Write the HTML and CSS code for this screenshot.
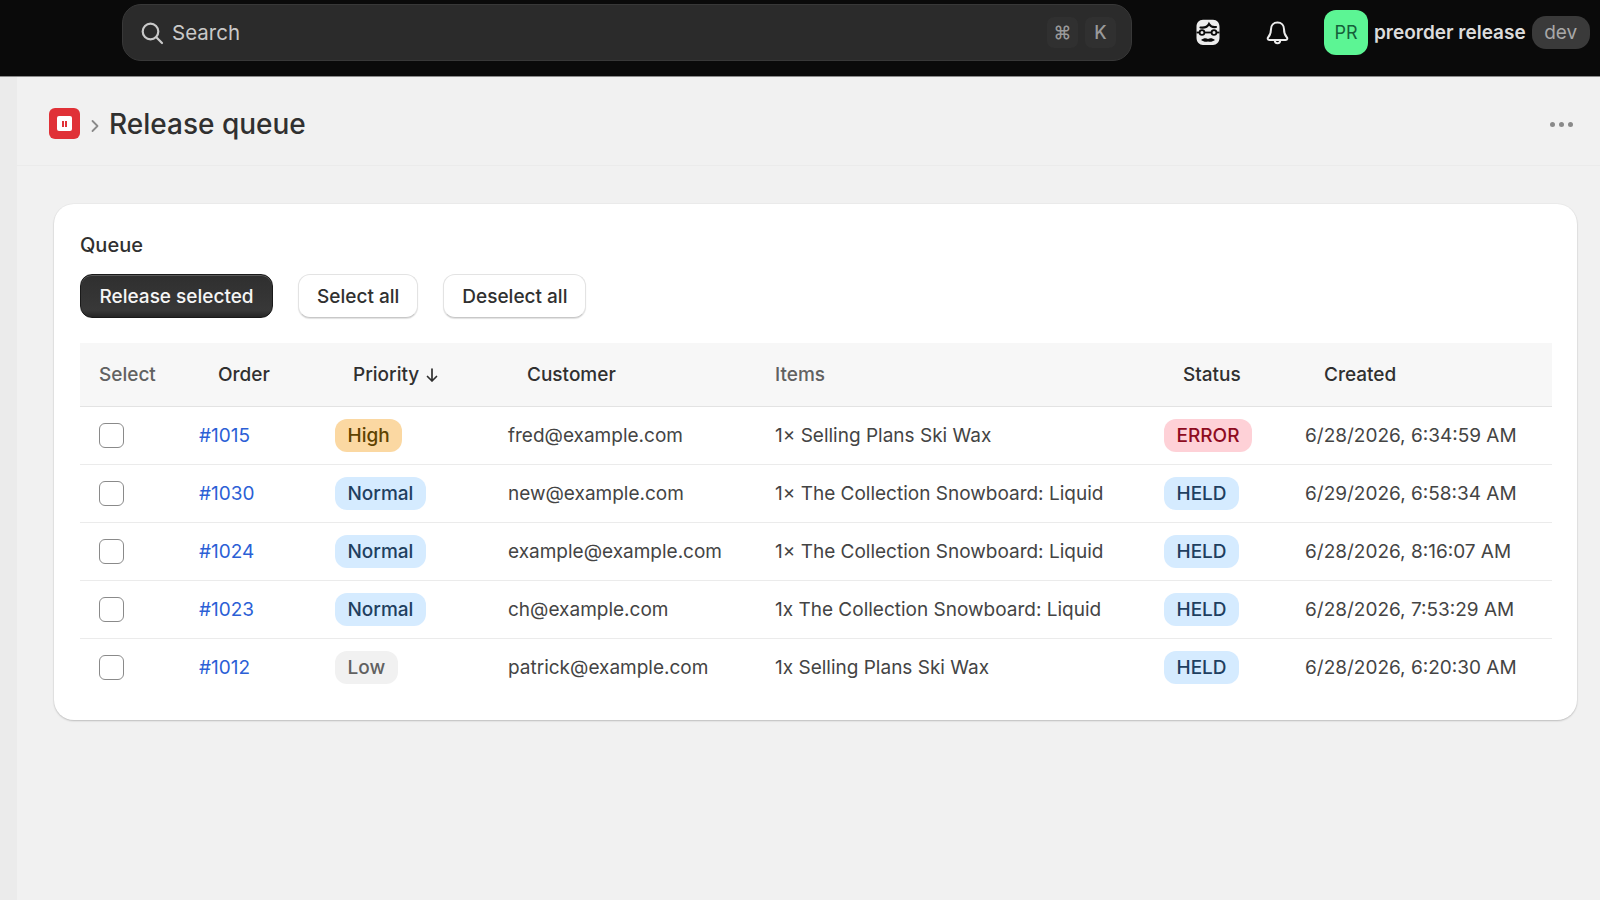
FILE: index.html
```html
<!DOCTYPE html>
<html lang="en">
<head>
  <meta charset="UTF-8" />
  <title>Release queue</title>
  <link rel="stylesheet" href="styles.css">
</head>
<body>
  <header class="topbar">
    <div class="search">
      <svg class="search-icon" width="24" height="24" viewBox="0 0 24 24" fill="none" stroke="currentColor" stroke-width="2.2" stroke-linecap="round">
        <circle cx="10.5" cy="10.5" r="7.8"/>
        <path d="M16.3 16.3l5.7 5.7"/>
      </svg>
      <span class="search-text">Search</span>
      <span class="kbd">⌘</span>
      <span class="kbd">K</span>
    </div>
    <svg class="face" width="24" height="27" viewBox="0 0 24 27">
      <path d="M7 .8h10c4 0 6.500 3 6.500 7v11c0 4.500-3 7.200-6.500 7.200H7c-3.500 0-6.500-2.700-6.500-7.200v-11c0-4 2.500-7 6.500-7z" fill="#ececec"/>
      <path d="M4.500 8.500c4 .5 7-.5 8.500-3.500 1.500 2.500 4 3.500 7 3" fill="none" stroke="#0a0a0a" stroke-width="2.200" stroke-linecap="round"/>
      <path d="M.5 13.500h23" stroke="#0a0a0a" stroke-width="1.800"/>
      <circle cx="6" cy="13.500" r="2.400" fill="#ececec" stroke="#0a0a0a" stroke-width="1.800"/>
      <circle cx="18" cy="13.500" r="2.400" fill="#ececec" stroke="#0a0a0a" stroke-width="1.800"/>
      <path d="M5 21c2.500-2 5-2.500 7-1 2-1.500 4.500-1 7 1-2.500 1.800-4.500 2-7 1.500-2.500.5-4.500.3-7-1.500z" fill="#0a0a0a"/>
    </svg>
    <svg class="bell" width="23" height="24" viewBox="0 0 23 24" fill="none" stroke="#ececec" stroke-width="2" stroke-linejoin="round">
      <path d="M11.500 1.500c-4 0-6.500 3-6.500 6.800 0 3.700-.8 5.700-2.600 7.700-1.200 1.300-.8 3 1 3h16.200c1.800 0 2.200-1.700 1-3-1.800-2-2.600-4-2.600-7.700 0-3.800-2.500-6.800-6.500-6.800z"/>
      <path d="M8.800 19.500c0 3.500 5.400 3.500 5.400 0"/>
    </svg>
    <div class="avatar">PR</div>
    <span class="shop-name">preorder release</span>
    <span class="dev-tag">dev</span>
  </header>

  <div class="layout">
    <div class="sidebar"></div>
    <main class="main">
      <div class="page-head">
        <div class="app-logo">
          <div class="app-logo-inner"><span></span><span></span></div>
        </div>
        <svg class="crumb" width="10" height="16" viewBox="0 0 10 16" fill="none" stroke="#8a8a8a" stroke-width="1.800" stroke-linecap="round" stroke-linejoin="round">
          <path d="M2.500 3l5 5-5 5"/>
        </svg>
        <h1>Release queue</h1>
        <div class="dots"><i></i><i></i><i></i></div>
      </div>

      <section class="card">
        <h2>Queue</h2>
        <div class="actions">
          <button class="btn btn-primary">Release selected</button>
          <button class="btn">Select all</button>
          <button class="btn">Deselect all</button>
        </div>

        <table class="queue">
          <colgroup>
            <col class="c-select"><col class="c-order"><col class="c-priority"><col class="c-customer"><col class="c-items"><col class="c-status"><col class="c-created">
          </colgroup>
          <thead>
            <tr>
              <th class="muted">Select</th>
              <th class="sortable">Order</th>
              <th class="sortable th-priority">Priority <svg class="arrow" width="14" height="16" viewBox="0 0 14 16" fill="none" stroke="currentColor" stroke-width="1.700" stroke-linecap="round" stroke-linejoin="round"><path d="M7 2v12M2.500 9.500L7 14l4.500-4.500"/></svg></th>
              <th class="sortable">Customer</th>
              <th class="muted flush">Items</th>
              <th class="sortable">Status</th>
              <th class="sortable">Created</th>
            </tr>
          </thead>
          <tbody>
            <tr>
              <td><span class="check"></span></td>
              <td><a href="#">#1015</a></td>
              <td><span class="pill pill-high">High</span></td>
              <td>fred@example.com</td>
              <td class="flush">1× Selling Plans Ski Wax</td>
              <td><span class="pill pill-error">ERROR</span></td>
              <td>6/28/2026, 6:34:59 AM</td>
            </tr>
            <tr>
              <td><span class="check"></span></td>
              <td><a href="#">#1030</a></td>
              <td><span class="pill pill-info">Normal</span></td>
              <td>new@example.com</td>
              <td class="flush">1× The Collection Snowboard: Liquid</td>
              <td><span class="pill pill-info">HELD</span></td>
              <td>6/29/2026, 6:58:34 AM</td>
            </tr>
            <tr>
              <td><span class="check"></span></td>
              <td><a href="#">#1024</a></td>
              <td><span class="pill pill-info">Normal</span></td>
              <td>example@example.com</td>
              <td class="flush">1× The Collection Snowboard: Liquid</td>
              <td><span class="pill pill-info">HELD</span></td>
              <td>6/28/2026, 8:16:07 AM</td>
            </tr>
            <tr>
              <td><span class="check"></span></td>
              <td><a href="#">#1023</a></td>
              <td><span class="pill pill-info">Normal</span></td>
              <td>ch@example.com</td>
              <td class="flush">1x The Collection Snowboard: Liquid</td>
              <td><span class="pill pill-info">HELD</span></td>
              <td>6/28/2026, 7:53:29 AM</td>
            </tr>
            <tr>
              <td><span class="check"></span></td>
              <td><a href="#">#1012</a></td>
              <td><span class="pill pill-low">Low</span></td>
              <td>patrick@example.com</td>
              <td class="flush">1x Selling Plans Ski Wax</td>
              <td><span class="pill pill-info">HELD</span></td>
              <td>6/28/2026, 6:20:30 AM</td>
            </tr>
          </tbody>
        </table>
      </section>
    </main>
  </div>
</body>
</html>
```

FILE: styles.css
```css
html, body {
  height: 100%;
}

body {
  margin: 0;
  height: 900px;
  overflow: hidden;
  font-family: 'Inter', sans-serif;
  font-size: 19px;
  color: #303030;
  background: #f1f1f1;
  display: flex;
  flex-direction: column;
}

/* top bar */
.topbar {
  height: 76px;
  box-sizing: content-box;
  flex: none;
  background: #0a0a0a;
  border-bottom: 1px solid #8a8a8a;
  display: flex;
  align-items: flex-start;
  padding-left: 122px;
}

.search {
  width: 1010px;
  height: 57px;
  margin-top: 4px;
  box-sizing: border-box;
  background: #2b2b2b;
  border: 1px solid #383838;
  border-radius: 19px;
  display: flex;
  align-items: center;
  padding: 0 15px 0 17px;
  color: #c9c9c9;
}

.search-icon {
  flex: none;
}

.search-text {
  margin-left: 8px;
  font-size: 20.500px;
  flex: 1;
}

.kbd {
  width: 31px;
  height: 31px;
  margin-left: 7px;
  border-radius: 7px;
  background: #303030;
  color: #9a9a9a;
  display: flex;
  align-items: center;
  justify-content: center;
  font-size: 18px;
  font-weight: 500;
}

.face {
  margin: 19px 0 0 64px;
  flex: none;
}

.bell {
  margin: 21px 0 0 46px;
  flex: none;
}

.avatar {
  margin: 10px 0 0 35px;
  width: 44px;
  height: 45px;
  border-radius: 12px;
  background: #5cf594;
  color: #15603a;
  display: flex;
  align-items: center;
  justify-content: center;
  font-size: 18px;
}

.shop-name {
  margin-left: 6px;
  line-height: 65px;
  color: #dcdcdc;
  font-size: 19px;
  font-weight: 600;
  white-space: nowrap;
}

.dev-tag {
  margin: 16px 0 0 6px;
  width: 58px;
  height: 33px;
  border-radius: 14px;
  background: #3a3a3a;
  color: #a8a8a8;
  display: flex;
  align-items: center;
  justify-content: center;
  font-size: 19px;
}

/* page */
.layout {
  flex: 1;
  display: flex;
}

.sidebar {
  width: 17px;
  flex: none;
  background: #ebebeb;
}

.main {
  flex: 1;
  min-width: 0;
}

.page-head {
  height: 89px;
  box-sizing: border-box;
  border-bottom: 1px solid #ebebeb;
  display: flex;
  align-items: center;
  padding: 5px 27px 0 32px;
}

.app-logo {
  width: 31px;
  height: 31px;
  border-radius: 6px;
  background: #e03137;
  display: flex;
  align-items: center;
  justify-content: center;
}

.app-logo-inner {
  width: 15px;
  height: 15px;
  border-radius: 2px;
  background: #fff;
  display: flex;
  align-items: center;
  justify-content: center;
  gap: 1.500px;
}

.app-logo-inner span {
  width: 2px;
  height: 6px;
  background: #e03137;
}

.crumb {
  margin: 4px 0 0 10px;
}

h1 {
  margin: 0 0 0 9px;
  font-size: 28px;
  font-weight: 500;
  color: #303030;
  flex: 1;
}

.dots {
  display: flex;
  gap: 4px;
  margin-top: 1px;
}

.dots i {
  width: 5px;
  height: 5px;
  border-radius: 50%;
  background: #8a8a8a;
}

.card {
  margin: 38px 23px 0 37px;
  height: 516px;
  box-sizing: border-box;
  padding: 29px 26px 0;
  background: #fff;
  border-radius: 20px;
  box-shadow: 0 1px 2px rgba(0, 0, 0, 0.2), 0 0 0 1px rgba(0, 0, 0, 0.02);
}

h2 {
  margin: 0;
  font-size: 20px;
  line-height: 25px;
  font-weight: 500;
}

.actions {
  display: flex;
  gap: 25px;
  margin-top: 16px;
}

.btn {
  height: 44px;
  padding: 0 18px;
  font-family: inherit;
  font-size: 19px;
  font-weight: 500;
  color: #303030;
  background: #fff;
  border: 1px solid #e3e3e3;
  border-bottom-color: #c8c8c8;
  border-radius: 12px;
  box-shadow: 0 1px 1px rgba(0, 0, 0, 0.12);
}

.btn-primary {
  padding: 0 18.500px;
  color: #f5f5f5;
  background: linear-gradient(#2f2f2f, #383838 85%, #262626);
  border: 1px solid #1a1a1a;
  box-shadow: inset 0 1px 0 #5a5a5a;
}

.queue {
  width: 1472px;
  margin-top: 25px;
  table-layout: fixed;
  border-collapse: collapse;
}

.c-select { width: 100px; }
.c-order { width: 136px; }
.c-priority { width: 173px; }
.c-customer { width: 267px; }
.c-items { width: 389px; }
.c-status { width: 141px; }
.c-created { width: 266px; }

th {
  height: 63px;
  padding: 0 0 0 19px;
  box-sizing: border-box;
  background: #f7f7f7;
  border-bottom: 1px solid #e3e3e3;
  text-align: left;
  font-weight: 500;
  color: #303030;
  white-space: nowrap;
}

th.sortable {
  padding-left: 38px;
}

th.th-priority {
  padding-left: 37px;
}

th.muted {
  color: #616161;
}

th.flush,
td.flush {
  padding-left: 19px;
}

.arrow {
  margin-left: 1px;
  vertical-align: -2px;
}

td {
  height: 58px;
  padding: 0 0 0 19px;
  box-sizing: border-box;
  border-bottom: 1px solid #ebebeb;
  white-space: nowrap;
  color: #444;
}

tbody tr:last-child td {
  border-bottom: none;
}

td a {
  color: #2c5fd6;
  text-decoration: none;
}

.check {
  display: block;
  width: 25px;
  height: 25px;
  box-sizing: border-box;
  background: #fff;
  border: 1.500px solid #8a8a8a;
  border-radius: 6px;
}

.pill {
  display: inline-block;
  height: 33px;
  line-height: 33px;
  padding: 0 12.500px;
  border-radius: 12px;
  font-weight: 500;
}

.pill-high {
  background: #fbd8a2;
  color: #5e4200;
}

.pill-info {
  background: #d5ebff;
  color: #1f3f60;
}

.pill-error {
  background: #fed1d7;
  color: #8e0b21;
}

.pill-low {
  background: #f1f1f1;
  color: #616161;
}
```
